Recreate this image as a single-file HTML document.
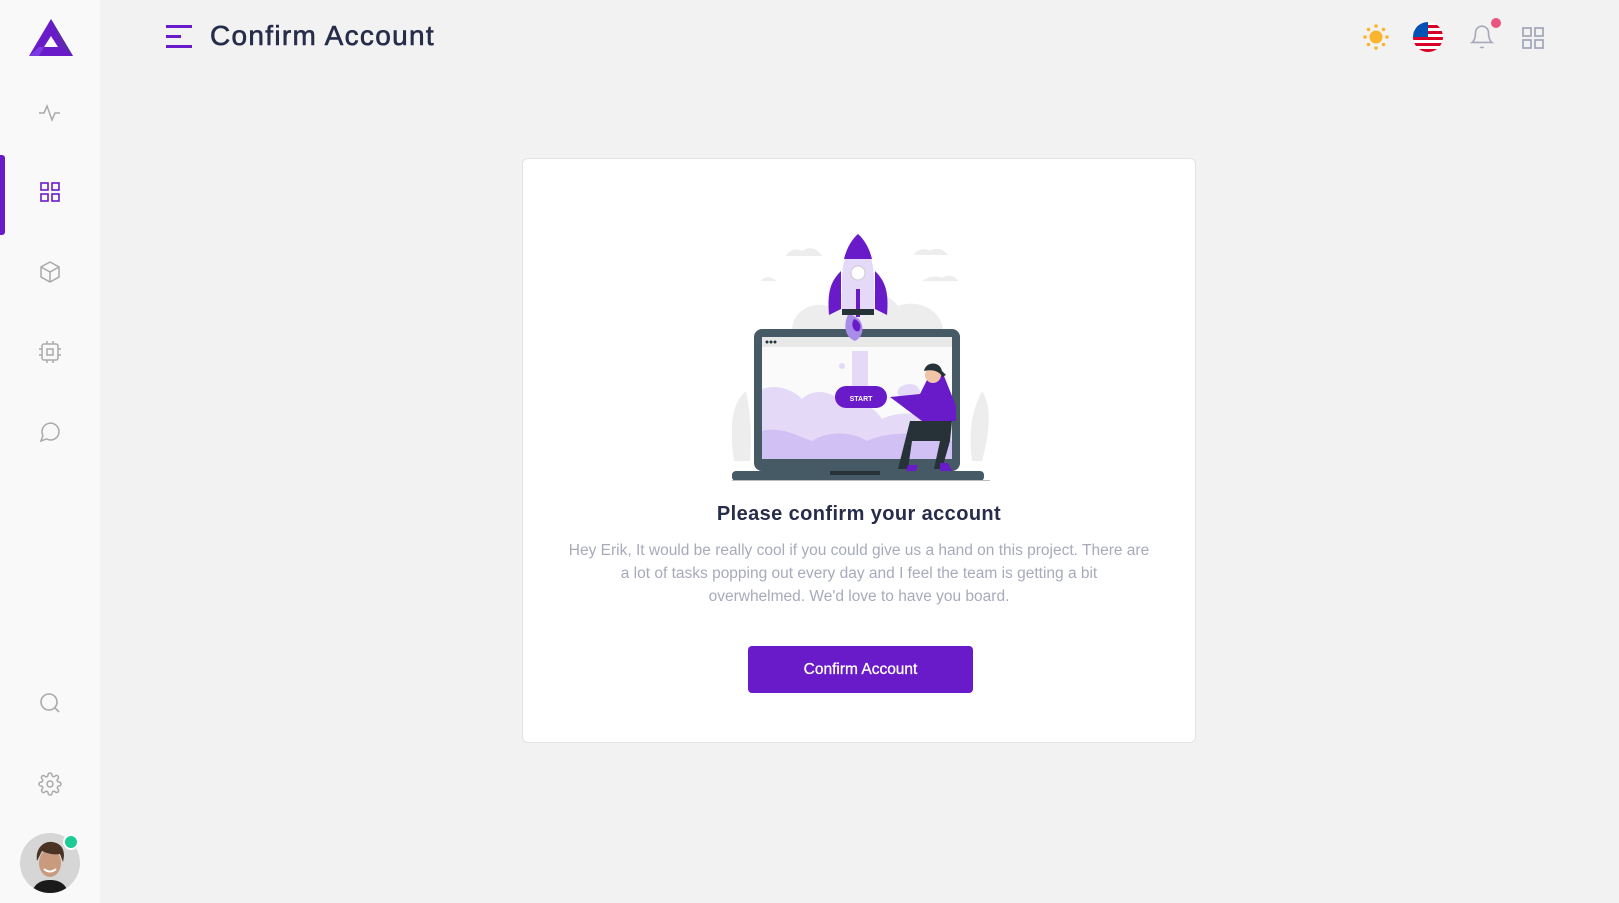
<!DOCTYPE html>
<html><head><meta charset="utf-8"><style>
*{box-sizing:border-box;margin:0;padding:0}
body{width:1619px;height:903px;background:#f2f2f3;font-family:"Liberation Sans",sans-serif;position:relative;overflow:hidden}
.side{position:absolute;left:0;top:0;width:100px;height:903px;background:#f9f9f9}
.ic{position:absolute;left:38px;width:24px;height:24px}
.bar{position:absolute;left:0;top:155px;width:5px;height:80px;background:#6a1bc9;border-radius:0 3px 3px 0}
.title{position:absolute;left:210px;top:20px;font-size:28px;color:#262c49;font-weight:normal;-webkit-text-stroke:0.6px #262c49;letter-spacing:1.3px}
.card{position:absolute;left:522px;top:158px;width:674px;height:585px;background:#fff;border:1px solid #e3e3e6;border-radius:6px}
h2{position:absolute;left:0;right:0;top:344px;text-align:center;font-size:20px;font-weight:600;color:#262c49;letter-spacing:0.4px}
p{position:absolute;left:10px;right:10px;top:380px;text-align:center;font-size:15.5px;line-height:23px;color:#a7aabb;white-space:nowrap}
.btn{position:absolute;left:225px;top:487px;width:225px;height:47px;background:#6a1bc9;border-radius:4px;color:#fff;font-size:15.5px;text-align:center;line-height:47px;-webkit-text-stroke:0.3px #fff}
</style></head><body>
<div class="side">
<svg style="position:absolute;left:29px;top:19px" width="44" height="38" viewBox="0 0 44 38"><polygon points="22,0 44,37 0,37" fill="#6a1bc9"/><polygon points="22,0 44,37 33,28" fill="#5a2aa8"/><polygon points="22,17 29,28 15,28" fill="#f9f9f9"/><polygon points="0,37 10,28 15,28 10,37" fill="#7c3ae0"/></svg>
<svg class="ic" style="top:101px" viewBox="0 0 24 24" fill="none" stroke="#a9a9a9" stroke-width="1.5"><path d="M1 12h5l3-7 5 14 3-7h5"/></svg>
<div class="bar"></div>
<svg class="ic" style="top:180px" viewBox="0 0 24 24" fill="none" stroke="#6a1bc9" stroke-width="1.6"><rect x="3" y="3" width="7" height="7"/><rect x="14" y="3" width="7" height="7"/><rect x="3" y="14" width="7" height="7"/><rect x="14" y="14" width="7" height="7"/></svg>
<svg class="ic" style="top:260px" viewBox="0 0 24 24" fill="none" stroke="#a9a9a9" stroke-width="1.5"><path d="M12 2l9 5v10l-9 5-9-5V7z"/><path d="M3 7l9 5 9-5M12 12v10"/></svg>
<svg class="ic" style="top:340px" viewBox="0 0 24 24" fill="none" stroke="#a9a9a9" stroke-width="1.5"><rect x="4" y="4" width="16" height="16" rx="2"/><rect x="9" y="9" width="6" height="6"/><path d="M9 1v3M15 1v3M9 20v3M15 20v3M1 9h3M1 15h3M20 9h3M20 15h3"/></svg>
<svg class="ic" style="top:420px" viewBox="0 0 24 24" fill="none" stroke="#a9a9a9" stroke-width="1.5"><path d="M21 11.5a8.4 8.4 0 0 1-12.5 7.4L3 21l1.9-5.5A8.5 8.5 0 1 1 21 11.5z"/></svg>
<svg class="ic" style="top:691px" viewBox="0 0 24 24" fill="none" stroke="#a9a9a9" stroke-width="1.6"><circle cx="11" cy="11" r="8"/><path d="M21 21l-4.3-4.3"/></svg>
<svg class="ic" style="top:772px" viewBox="0 0 24 24" fill="none" stroke="#a9a9a9" stroke-width="1.5"><circle cx="12" cy="12" r="3"/><path d="M19.4 15a1.7 1.7 0 0 0 .3 1.8l.1.1a2 2 0 1 1-2.8 2.8l-.1-.1a1.7 1.7 0 0 0-1.8-.3 1.7 1.7 0 0 0-1 1.5V21a2 2 0 1 1-4 0v-.1a1.7 1.7 0 0 0-1.1-1.5 1.7 1.7 0 0 0-1.8.3l-.1.1a2 2 0 1 1-2.8-2.8l.1-.1a1.7 1.7 0 0 0 .3-1.8 1.7 1.7 0 0 0-1.5-1H3a2 2 0 1 1 0-4h.1a1.7 1.7 0 0 0 1.5-1.1 1.7 1.7 0 0 0-.3-1.8l-.1-.1a2 2 0 1 1 2.8-2.8l.1.1a1.7 1.7 0 0 0 1.8.3H9a1.7 1.7 0 0 0 1-1.5V3a2 2 0 1 1 4 0v.1a1.7 1.7 0 0 0 1 1.5 1.7 1.7 0 0 0 1.8-.3l.1-.1a2 2 0 1 1 2.8 2.8l-.1.1a1.7 1.7 0 0 0-.3 1.8V9a1.7 1.7 0 0 0 1.5 1H21a2 2 0 1 1 0 4h-.1a1.7 1.7 0 0 0-1.5 1z"/></svg>
<svg style="position:absolute;left:20px;top:833px" width="60" height="60" viewBox="0 0 60 60"><defs><clipPath id="c"><circle cx="30" cy="30" r="30"/></clipPath></defs><g clip-path="url(#c)"><rect width="60" height="60" fill="#d6d6d6"/><path d="M12 60c2-10 10-13 18-13s16 3 18 13z" fill="#1a1a1a"/><ellipse cx="30" cy="30" rx="11" ry="14" fill="#c89a7e"/><path d="M17 28c-2-14 8-20 15-19 10 1 14 9 11 20l-3-8c-5 1-12 0-18-3z" fill="#4a3224"/><path d="M24 36q6 5 12 0" stroke="#fff" stroke-width="2" fill="none"/></g></svg>
<div style="position:absolute;left:63px;top:834px;width:16px;height:16px;border-radius:50%;background:#1dcc95;border:2px solid #fff"></div>
</div>

<svg style="position:absolute;left:166px;top:25px" width="26" height="23"><rect x="0" y="0" width="26" height="3" fill="#6a1bc9"/><rect x="0" y="10" width="15" height="3" fill="#6a1bc9"/><rect x="0" y="20" width="26" height="3" fill="#6a1bc9"/></svg>
<div class="title">Confirm Account</div>

<svg style="position:absolute;left:1361px;top:23px" width="30" height="28" viewBox="0 0 30 28"><circle cx="15" cy="14" r="6.5" fill="#fdb42d"/><g fill="#fdb42d"><circle cx="15" cy="3" r="1.8"/><circle cx="15" cy="25" r="1.8"/><circle cx="4" cy="14" r="1.8"/><circle cx="26" cy="14" r="1.8"/><circle cx="7.5" cy="6.5" r="1.8"/><circle cx="22.5" cy="6.5" r="1.8"/><circle cx="7.5" cy="21.5" r="1.8"/><circle cx="22.5" cy="21.5" r="1.8"/></g></svg>
<svg style="position:absolute;left:1413px;top:22px" width="30" height="30" viewBox="0 0 30 30"><defs><clipPath id="f"><circle cx="15" cy="15" r="15"/></clipPath></defs><g clip-path="url(#f)"><rect width="30" height="30" fill="#fff"/><g fill="#d80027"><rect y="3" width="30" height="3"/><rect y="9" width="30" height="3"/><rect y="15" width="30" height="3"/><rect y="21" width="30" height="3"/><rect y="27" width="30" height="3"/></g><rect width="15" height="15" fill="#0052b4"/></g></svg>
<svg style="position:absolute;left:1469px;top:24px" width="26" height="26" viewBox="0 0 24 24" fill="none" stroke="#a5a8ba" stroke-width="1.5"><path d="M18 8A6 6 0 0 0 6 8c0 7-3 9-3 9h18s-3-2-3-9"/><path d="M10.5 21a1.7 1.7 0 0 0 3 0"/></svg>
<div style="position:absolute;left:1491px;top:18px;width:10px;height:10px;border-radius:50%;background:#ea5480"></div>
<svg style="position:absolute;left:1522px;top:27px" width="22" height="22" viewBox="0 0 22 22" fill="none" stroke="#a5a8ba" stroke-width="1.8"><rect x="1" y="1" width="8" height="8"/><rect x="13" y="1" width="8" height="8"/><rect x="1" y="13" width="8" height="8"/><rect x="13" y="13" width="8" height="8"/></svg>

<div class="card">
<svg style="position:absolute;left:209px;top:72px" width="262" height="250" viewBox="0 0 262 250">
<g fill="#ededed"><path d="M40 25h50c-4-8-14-10-20-5-6-4-14 0-16 5z"/><path d="M170 24h46c-4-6-12-8-18-4-6-4-14-1-16 4z"/><path d="M190 0h30c-3-5-10-6-15-2-4-2-10 0-15 2z"/><path d="M20 50h24c-4-5-12-5-15 0z"/><path d="M190 50h36c-3-6-11-7-16-3-6-3-14-1-20 3z"/><path d="M60 100c0-20 20-30 36-25 10-20 50-25 70 0 20-8 45 5 45 25z"/><path d="M2 230c-6-40 0-60 12-70 4 20 6 40 4 70zM250 230c8-30 10-55 0-70-10 20-14 40-10 70z"/></g>
<rect x="22" y="98" width="206" height="142" rx="8" fill="#455a64"/>
<rect x="30" y="106" width="190" height="122" fill="#fafafa"/>
<rect x="30" y="106" width="190" height="10" fill="#e8e8e8"/>
<g fill="#263238"><circle cx="35" cy="111" r="1.5"/><circle cx="39" cy="111" r="1.5"/><circle cx="43" cy="111" r="1.5"/></g>
<rect x="120" y="120" width="16" height="100" fill="#e4daf7"/>
<path d="M30 228v-70c15-5 30 0 40 10 10-10 30-10 40 5 15-5 30 0 40 15 20-10 50-5 70 5v35z" fill="#e4daf7"/>
<path d="M30 228v-28c20-5 35 5 50 10 15-10 40-10 55 0 20-10 60-10 85 0v18z" fill="#d1c0f3"/>
<path d="M170 155c10-5 20 0 18 10-2 8-12 5-18 2-6-3-6-9 0-12z" fill="#e4daf7"/>
<circle cx="110" cy="135" r="3" fill="#e4daf7"/>
<g transform="translate(5,0)">
<path d="M112 82c-6 10-5 24 6 28 8-4 10-14 4-22z" fill="#a98be8"/>
<path d="M117 88c-4 6 0 14 5 12 3-4 1-10-5-12z" fill="#6a1bc9"/>
<path d="M104 40c-10 10-14 20-12 44l12-6z" fill="#6a1bc9"/><path d="M138 40c10 10 14 20 12 44l-12-6z" fill="#6a1bc9"/>
<path d="M121 3c-10 10-16 28-16 46v30h32V49c0-18-6-36-16-46z" fill="#e4daf7"/>
<path d="M121 3c-8 7-12 17-14 25h28c-2-8-6-18-14-25z" fill="#6a1bc9"/>
<circle cx="121" cy="42" r="7" fill="#fff" stroke="#ccc"/>
<rect x="119" y="58" width="4" height="28" fill="#6a1bc9"/>
<rect x="105" y="78" width="32" height="6" fill="#263238"/>
<rect x="98" y="155" width="52" height="22" rx="11" fill="#6a1bc9"/>
<text x="124" y="170" font-family="Liberation Sans" font-size="7" font-weight="bold" fill="#fff" text-anchor="middle">START</text>
</g>
<g transform="translate(8,0)">
<path d="M150 166l30-3 10-20 14 2 12 30v15h-34z" fill="#6a1bc9"/>
<path d="M170 190h42l-2 20-8 28h-8l6-28h-28l-4 28h-10z" fill="#263238"/>
<circle cx="193" cy="144" r="8" fill="#f2c4a8"/><path d="M184 140c2-10 16-10 18 0l4 4-4 2c-2-6-10-8-18-6z" fill="#263238"/>
<path d="M166 240h10l2-6h-10zM200 240h12l-4-8h-8z" fill="#6a1bc9"/>
</g>
<rect x="0" y="240" width="252" height="10" rx="4" fill="#455a64"/>
<rect x="98" y="240" width="50" height="4" fill="#263238"/>
<rect x="-4" y="249" width="262" height="1" fill="#bbb"/>
</svg>
<h2>Please confirm your account</h2>
<p>Hey Erik, It would be really cool if you could give us a hand on this project. There are<br>a lot of tasks popping out every day and I feel the team is getting a bit<br>overwhelmed. We'd love to have you board.</p>
<div class="btn">Confirm Account</div>
</div>
</body></html>
